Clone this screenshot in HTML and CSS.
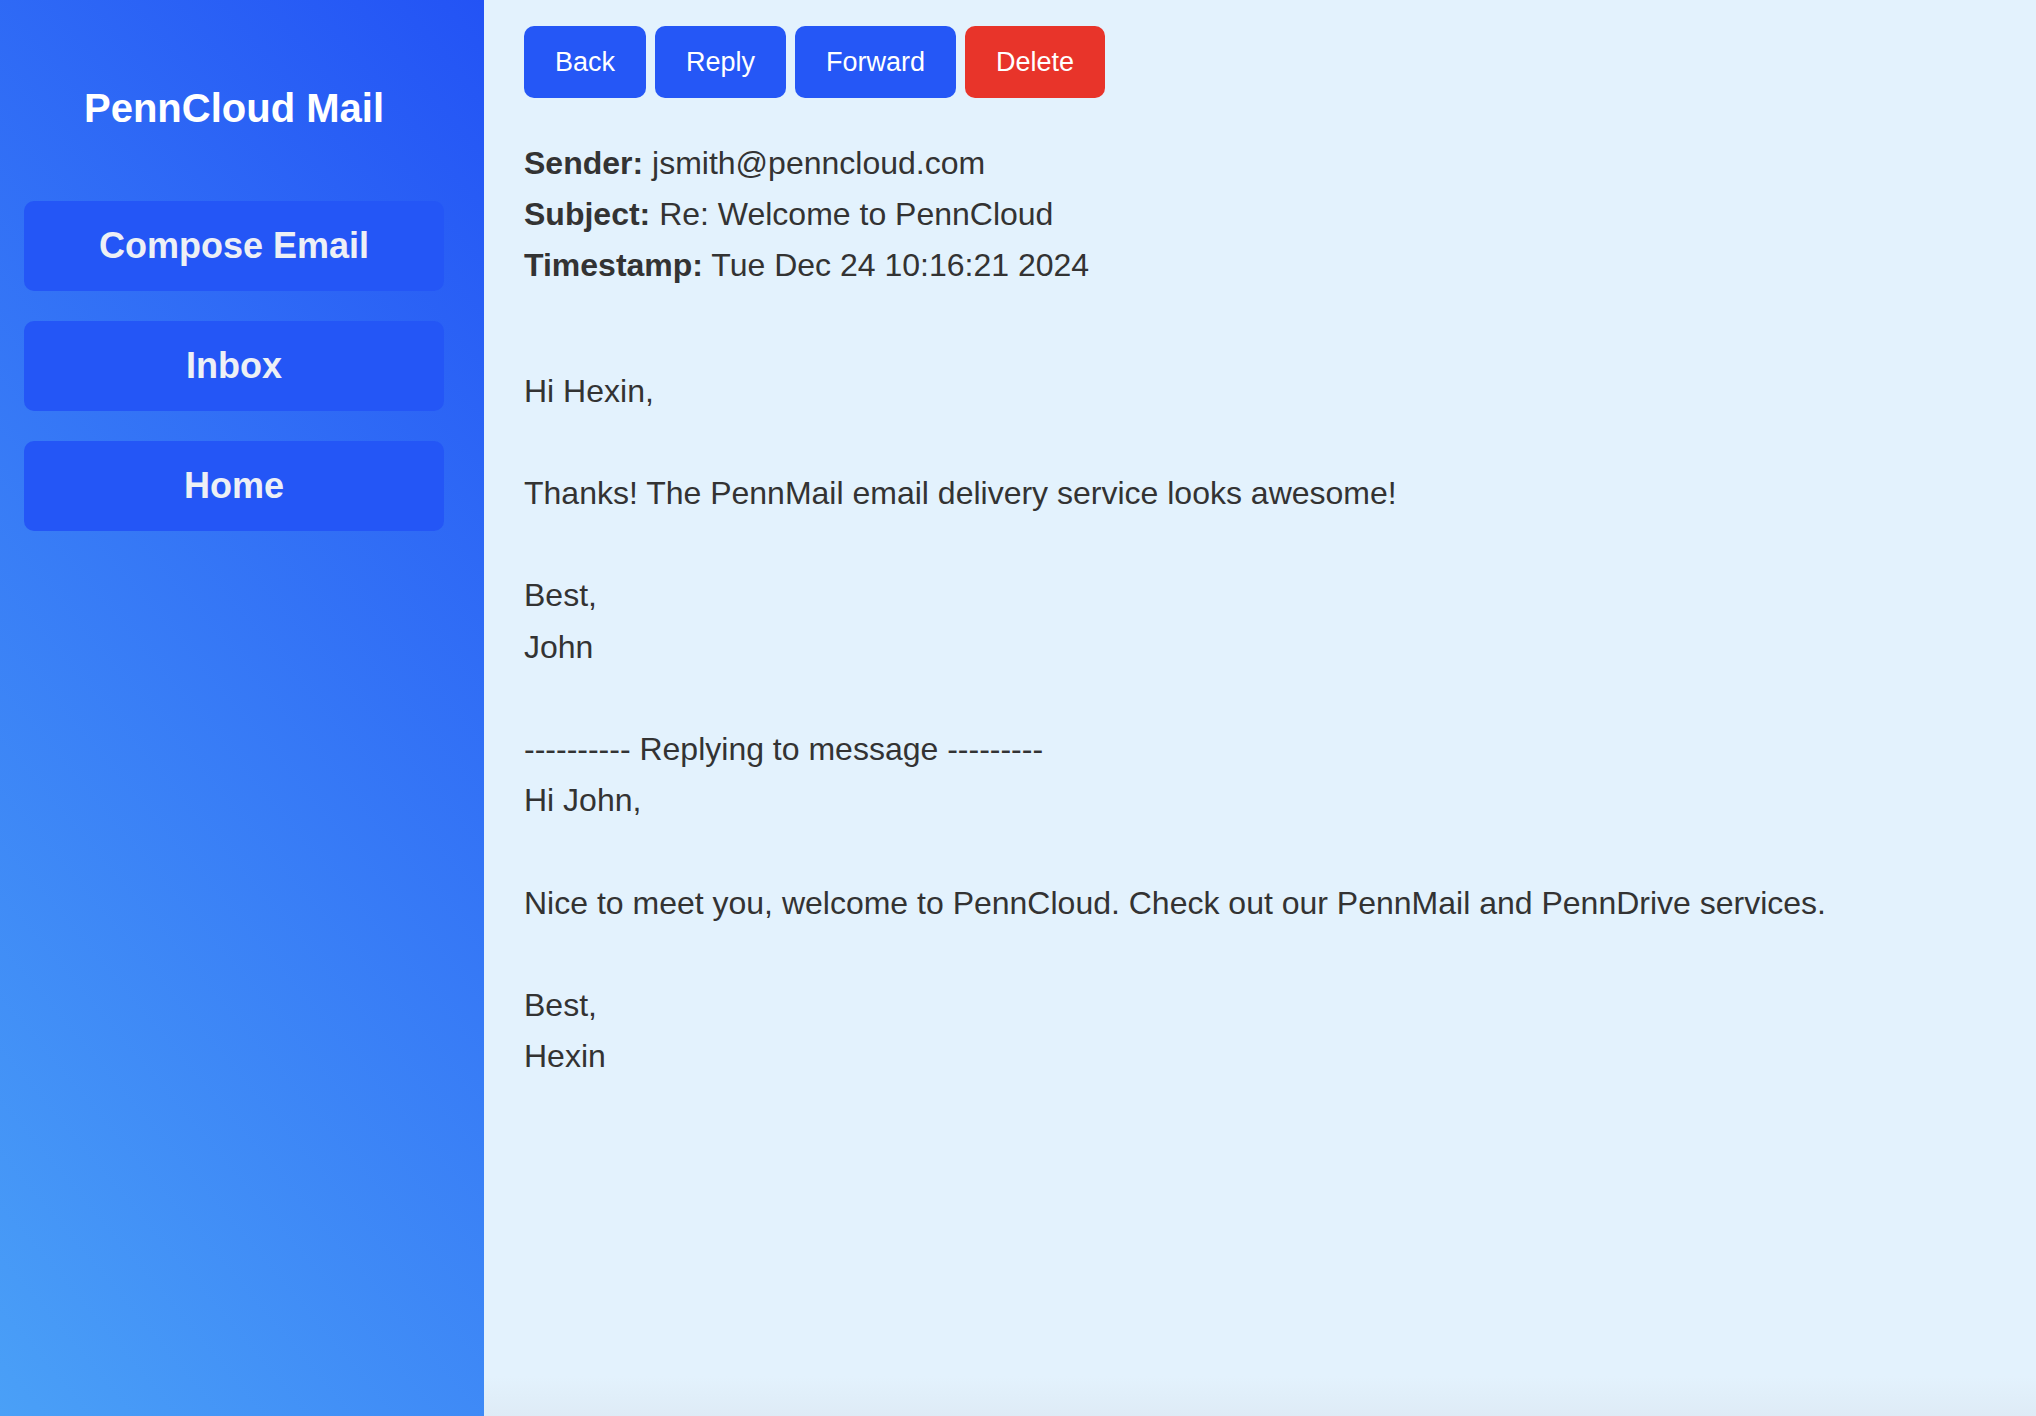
FILE: index.html
```html
<!DOCTYPE html>
<html lang="en">
<head>
<meta charset="utf-8">
<title>PennCloud Mail</title>
<link rel="stylesheet" href="styles.css">
</head>
<body>
<div class="app">
  <aside class="sidebar">
    <h1 class="brand">PennCloud Mail</h1>
    <nav class="nav">
      <a class="nav-btn" href="#">Compose Email</a>
      <a class="nav-btn" href="#">Inbox</a>
      <a class="nav-btn" href="#">Home</a>
    </nav>
  </aside>
  <main class="main">
    <div class="actions">
      <button class="btn">Back</button>
      <button class="btn">Reply</button>
      <button class="btn">Forward</button>
      <button class="btn btn-danger">Delete</button>
    </div>
    <div class="meta">
      <div><strong>Sender:</strong> jsmith@penncloud.com</div>
      <div><strong>Subject:</strong> Re: Welcome to PennCloud</div>
      <div><strong>Timestamp:</strong> Tue Dec 24 10:16:21 2024</div>
    </div>
    <div class="message">Hi Hexin,

Thanks! The PennMail email delivery service looks awesome!

Best,
John

---------- Replying to message ---------
Hi John,

Nice to meet you, welcome to PennCloud. Check out our PennMail and PennDrive services.

Best,
Hexin</div>
  </main>
</div>
</body>
</html>
```

FILE: styles.css
```css
html, body {
  margin: 0;
  padding: 0;
  height: 100%;
}

body {
  font-family: "Liberation Sans", Arial, Helvetica, sans-serif;
  color: #333333;
  background: #e3f2fd;
}

.app {
  display: flex;
  height: 100vh;
}

.sidebar {
  width: 484px;
  flex: 0 0 484px;
  box-sizing: border-box;
  padding: 85px 40px 0 24px;
  background: linear-gradient(50deg, #4aa0f7 0%, #2353f5 100%);
  display: flex;
  flex-direction: column;
}

.brand {
  margin: 0 0 70px;
  font-size: 40px;
  line-height: 46px;
  font-weight: 700;
  color: #ffffff;
  text-align: center;
}

.nav {
  display: flex;
  flex-direction: column;
  gap: 30px;
}

.nav-btn {
  display: flex;
  align-items: center;
  justify-content: center;
  height: 90px;
  border-radius: 10px;
  background: #2456f6;
  color: #edf0f5;
  font-size: 36px;
  font-weight: 700;
  text-decoration: none;
}

.main {
  flex: 1;
  box-sizing: border-box;
  padding: 26px 40px;
  background: linear-gradient(to bottom, #e3f2fd calc(100% - 40px), #deebf6 100%);
}

.actions {
  display: flex;
  gap: 9px;
}

.btn {
  height: 72px;
  padding: 0 31px;
  border: none;
  border-radius: 10px;
  background: #2557f6;
  color: #ffffff;
  font-family: "Liberation Sans", Arial, Helvetica, sans-serif;
  font-size: 27px;
  cursor: pointer;
}

.btn-danger {
  background: #e8342a;
}

.meta {
  margin-top: 40px;
  font-size: 32px;
  line-height: 51.2px;
}

.meta strong {
  font-weight: 700;
}

.message {
  margin-top: 74px;
  font-size: 32px;
  line-height: 51.2px;
  white-space: pre-wrap;
}
```
